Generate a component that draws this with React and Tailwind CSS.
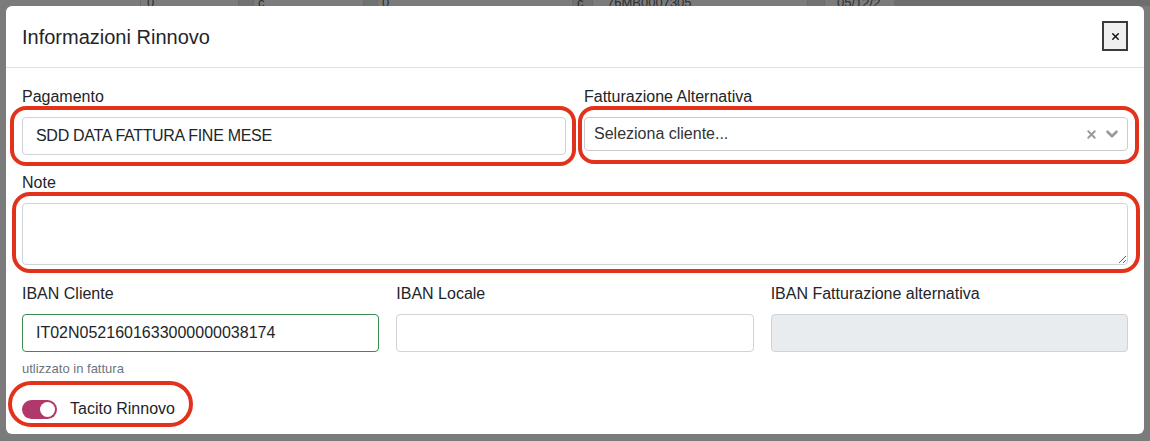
import React from 'react';
import { X, ChevronDown } from 'lucide-react';

const Label = ({ children }) => (
    <label className="block mb-2 text-base leading-6 pt-[1px] text-[#212529]">{children}</label>
);

const Input = ({ value, className = '' }) => (
    <div className={`h-[38px] rounded-[4px] border px-3 flex items-center text-base text-[#212529] ${className}`}>
        {value}
    </div>
);

// faint table row visible behind the backdrop
const BackdropRow = () => (
    <div className="absolute left-0 top-0 w-full h-[6px] flex text-[13px] leading-[6px] text-[#2d2d2d] overflow-hidden">
        <div className="w-[140px] h-full" />
        <div className="w-[98px] h-full border-l border-[#6c6c6c] pl-[6px]">0</div>
        <div className="w-[15px] h-full bg-[#727272] border-l border-[#6c6c6c]" />
        <div className="w-[110px] h-full border-l border-[#6c6c6c] pl-[4px]">c</div>
        <div className="w-[14px] h-full bg-[#727272] border-l border-[#6c6c6c]" />
        <div className="w-[195px] h-full border-l border-[#6c6c6c] pl-[4px]">0</div>
        <div className="w-[20px] h-full bg-[#727272] border-l border-[#6c6c6c] pl-[4px]">c</div>
        <div className="w-[215px] h-full border-l border-[#6c6c6c] pl-[14px]">76MB0007305</div>
        <div className="w-[17px] h-full bg-[#727272] border-l border-[#6c6c6c]" />
        <div className="w-[70px] h-full border-l border-[#6c6c6c] pl-[12px]">05/12/2</div>
        <div className="flex-1 h-full bg-[#6e6e6e]" />
    </div>
);

export default function App() {
    return (
        <div className="relative w-[1150px] h-[441px] overflow-hidden bg-[#7b7b7b] pt-[6px] px-[6px] font-['Liberation_Sans',Arial,sans-serif]">
            <BackdropRow />

            <div className="relative bg-white rounded-[6px] h-[428px]">
                {/* Header */}
                <div className="flex items-center justify-between h-[62px] px-4 border-b border-[#dee2e6]">
                    <h5 className="text-[20px] leading-[30px] text-[#212529]">Informazioni Rinnovo</h5>
                    <button className="w-[26px] h-[30px] mt-[-1px] flex items-center justify-center bg-[#efefef] border-2 border-[#3a3a3a] text-[#111]">
                        <X className="w-[11px] h-[11px]" strokeWidth={3} />
                    </button>
                </div>

                {/* Body */}
                <div className="px-4 pt-4">
                    <div className="grid grid-cols-2 gap-x-[18px]">
                        <div>
                            <Label>Pagamento</Label>
                            <Input value="SDD DATA FATTURA FINE MESE" className="border-[#ced4da] pl-[13px] tracking-[-0.3px]" />
                        </div>
                        <div>
                            <Label>Fatturazione Alternativa</Label>
                            <div className="h-[34px] rounded-[4px] border border-[#cccccc] flex items-center pl-[9px] pr-[6px] text-base text-[#333]">
                                <span className="flex-1">Seleziona cliente...</span>
                                <X className="w-[13px] h-[13px] text-[#999] mr-[5px]" strokeWidth={3.5} />
                                <ChevronDown className="w-[18px] h-[18px] text-[#999]" strokeWidth={3.5} />
                            </div>
                        </div>
                    </div>

                    <div className="mt-[15px]">
                        <Label>Note</Label>
                        <textarea
                            rows={2}
                            className="block w-full h-[62px] rounded-[4px] border border-[#ced4da] px-3 py-[6px] outline-none resize-y"
                        />
                    </div>

                    <div className="mt-4 grid grid-cols-3 gap-x-[17px]">
                        <div>
                            <Label>IBAN Cliente</Label>
                            <Input value="IT02N0521601633000000038174" className="border-[#3d8a4e] pl-[13px]" />
                            <div className="mt-[7px] text-[13px] leading-5 text-[#6c757d]">utlizzato in fattura</div>
                        </div>
                        <div>
                            <Label>IBAN Locale</Label>
                            <Input value="" className="border-[#ced4da]" />
                        </div>
                        <div>
                            <Label>IBAN Fatturazione alternativa</Label>
                            <Input value="" className="border-[#ced4da] bg-[#e9ecef]" />
                        </div>
                    </div>

                    <div className="mt-[18px] flex items-center gap-[13px] h-6">
                        <div className="w-[35px] h-[19px] rounded-full bg-[#b0386a] flex items-center justify-end pr-[2px]">
                            <div className="w-[15px] h-[15px] rounded-full bg-white" />
                        </div>
                        <span className="text-base text-[#212529]">Tacito Rinnovo</span>
                    </div>
                </div>
            </div>

            {/* Annotation outlines */}
            <div className="absolute left-[10px] top-[106px] w-[566px] h-[60px] rounded-[16px] border-4 border-[#e2321c]" />
            <div className="absolute left-[578px] top-[106px] w-[561px] h-[58px] rounded-[16px] border-4 border-[#e2321c]" />
            <div className="absolute left-[12px] top-[192px] w-[1128px] h-[81px] rounded-[18px] border-4 border-[#e2321c]" />
            <div className="absolute left-[8px] top-[381px] w-[185px] h-[46px] rounded-[23px] border-4 border-[#e2321c]" />
        </div>
    );
}
